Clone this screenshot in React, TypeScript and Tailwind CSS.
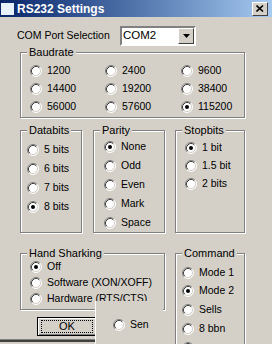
import React from 'react';

function Radio({ checked = false }: { checked?: boolean }) {
  return (
    <svg width="12" height="12" viewBox="0 0 12 12" className="shrink-0">
      <circle cx="6" cy="6" r="5" fill="#fff" />
      <path d="M2.11 9.89A5.5 5.5 0 0 1 9.89 2.11" stroke="#808080" fill="none" />
      <path d="M2.82 9.18A4.5 4.5 0 0 1 9.18 2.82" stroke="#404040" fill="none" />
      <path d="M9.89 2.11A5.5 5.5 0 0 1 2.11 9.89" stroke="#fff" fill="none" />
      <path d="M9.18 2.82A4.5 4.5 0 0 1 2.82 9.18" stroke="#d4d0c8" fill="none" />
      {checked && <circle cx="6" cy="6" r="2" fill="#000" />}
    </svg>
  );
}

function Option({ label, checked, h = 'h-[19px]' }: { label: string; checked?: boolean; h?: string }) {
  return (
    <div className={`flex items-center gap-[5px] ${h} whitespace-nowrap`}>
      <Radio checked={checked} />
      <span>{label}</span>
    </div>
  );
}

function Group({
  title,
  className,
  children,
}: {
  title: string;
  className: string;
  children: React.ReactNode;
}) {
  return (
    <div
      className={`relative border border-[#808080] shadow-[inset_1px_1px_0_#fff,1px_1px_0_#fff] ${className}`}
    >
      <span className="absolute -top-[8px] left-[6px] bg-[#d4d0c8] px-[2px] text-[11px] leading-[14px]">
        {title}
      </span>
      {children}
    </div>
  );
}

export default function App() {
  return (
    <div className="relative h-[344px] w-[272px] overflow-hidden bg-[#d4d0c8] font-['Liberation_Sans',Arial,sans-serif] text-[10.5px] text-black">
      <div className="flex h-[17px] items-center bg-gradient-to-r from-[#0a246a] to-[#a6caf0] pr-[4px]">
        <div className="ml-[1px] h-[12px] w-[13px] bg-[#e8f0fb]" />
        <span className="ml-[3px] text-[12px] font-bold text-white">RS232 Settings</span>
        <div className="ml-auto flex h-[14px] w-[16px] items-center justify-center border border-t-white border-l-white border-r-[#404040] border-b-[#404040] bg-[#d4d0c8]">
          <svg width="8" height="7" viewBox="0 0 8 7">
            <path d="M0.5 0.5L7 6.5M7 0.5L0.5 6.5" stroke="#000" strokeWidth="1.6" />
          </svg>
        </div>
      </div>

      <div className="mt-[9px] flex h-[20px] items-center pl-[17px]">
        <span className="w-[103px]">COM Port Selection</span>
        <div className="flex h-[20px] w-[76px] items-center border-2 border-t-[#808080] border-l-[#808080] border-r-white border-b-white bg-white text-[11.5px]">
          <span className="pl-[1px]">COM2</span>
          <div className="ml-auto flex h-[16px] w-[16px] items-center justify-center border border-t-white border-l-white border-r-[#404040] border-b-[#404040] bg-[#d4d0c8]">
            <svg width="7" height="4" viewBox="0 0 7 4">
              <path d="M0 0H7L3.5 4Z" fill="#000" />
            </svg>
          </div>
        </div>
      </div>

      <Group title="Baudrate" className="ml-[20px] mt-[6px] h-[66px] w-[225px] pl-[9px] pt-[9px]">
        <div className="grid grid-cols-[75px_76px_60px]">
          <Option label="1200" h="h-[18px]" />
          <Option label="2400" h="h-[18px]" />
          <Option label="9600" h="h-[18px]" />
          <Option label="14400" h="h-[18px]" />
          <Option label="19200" h="h-[18px]" />
          <Option label="38400" h="h-[18px]" />
          <Option label="56000" h="h-[18px]" />
          <Option label="57600" h="h-[18px]" />
          <Option label="115200" checked h="h-[18px]" />
        </div>
      </Group>

      <div className="ml-[20px] mt-[12px] flex h-[103px] gap-[10px]">
        <Group title="Databits" className="w-[62px] pl-[6px] pt-[9px]">
          <Option label="5 bits" />
          <Option label="6 bits" />
          <Option label="7 bits" />
          <Option label="8 bits" checked />
        </Group>
        <Group title="Parity" className="ml-[1px] w-[72px] pl-[10px] pt-[6px]">
          <Option label="None" checked />
          <Option label="Odd" />
          <Option label="Even" />
          <Option label="Mark" />
          <Option label="Space" />
        </Group>
        <Group title="Stopbits" className="w-[70px] pl-[9px] pt-[8px]">
          <Option label="1 bit" checked h="h-[18px]" />
          <Option label="1.5 bit" h="h-[18px]" />
          <Option label="2 bits" h="h-[18px]" />
        </Group>
      </div>

      <div className="ml-[20px] mt-[20px] flex items-start gap-[10px]">
        <div className="flex w-[145px] flex-col">
          <Group title="Hand Sharking" className="h-[57px] w-[145px] pl-[9px] pt-[5px]">
            <Option label="Off" checked h="h-[16px]" />
            <Option label="Software (XON/XOFF)" h="h-[16px]" />
            <Option label="Hardware (RTS/CTS)" h="h-[16px]" />
          </Group>
          <div className="ml-[17px] mt-[7px] flex h-[19px] w-[60px] items-center justify-center border border-black bg-[#d4d0c8] shadow-[inset_1px_1px_0_#fff,inset_-1px_-1px_0_#808080] text-[11px]">
            <div className="flex h-[13px] w-[52px] items-center justify-center border border-dotted border-black">
              OK
            </div>
          </div>
          <div className="-ml-[20px] mt-[3px] h-[3px] w-[95px] border-t border-t-[#808080] bg-[#404040]" />
        </div>
        <Group title="Command" className="h-[120px] w-[70px] pl-[6px] pt-[10px]">
          <Option label="Mode 1" h="h-[18px]" />
          <Option label="Mode 2" checked h="h-[18px]" />
          <Option label="Sells" h="h-[19px]" />
          <Option label="8 bbn" h="h-[19px]" />
          <Option label="" h="h-[19px]" />
        </Group>
      </div>

      <div className="absolute left-[95px] top-[301px] flex h-[50px] w-[68px] items-start border-l border-l-white bg-[#d4d0c8] pl-[17px] pt-[17px]">
        <Option label="Sen" h="h-[14px]" />
      </div>
    </div>
  );
}
